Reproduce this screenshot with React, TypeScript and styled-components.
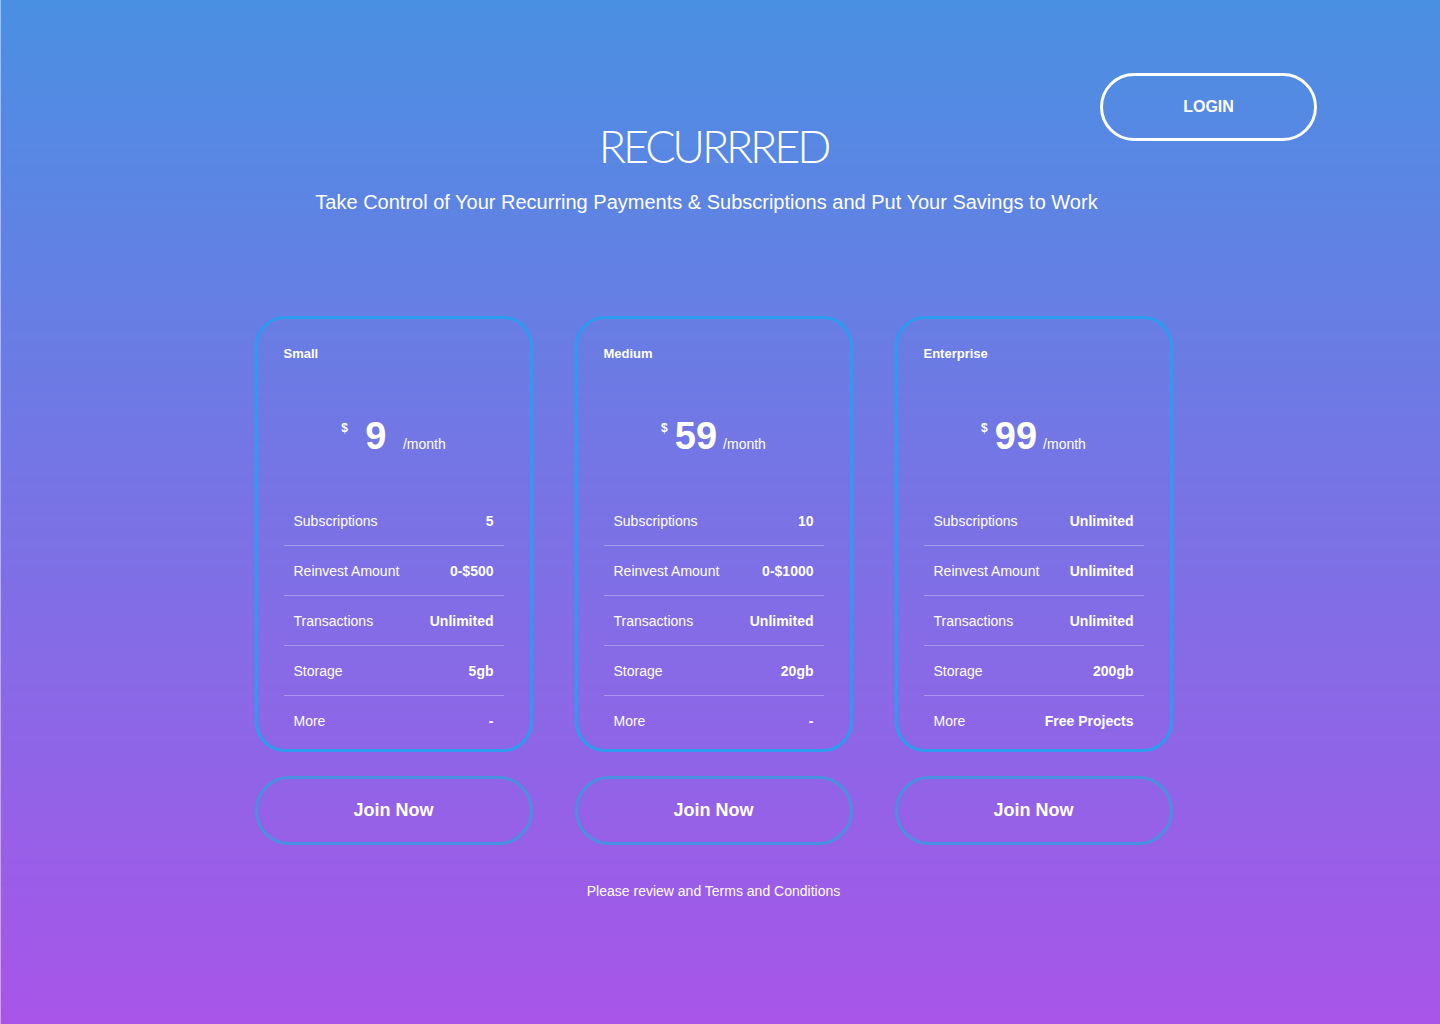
import React from "react";
import styled, { createGlobalStyle } from "styled-components";

interface Plan {
    name: string;
    price: number;
    subscriptions: string;
    reinvest: string;
    transactions: string;
    storage: string;
    more: string;
}

const plans: Plan[] = [
    { name: "Small", price: 9, subscriptions: "5", reinvest: "0-$500", transactions: "Unlimited", storage: "5gb", more: "-" },
    { name: "Medium", price: 59, subscriptions: "10", reinvest: "0-$1000", transactions: "Unlimited", storage: "20gb", more: "-" },
    { name: "Enterprise", price: 99, subscriptions: "Unlimited", reinvest: "Unlimited", transactions: "Unlimited", storage: "200gb", more: "Free Projects" },
];

const GlobalStyle = createGlobalStyle`
    html, body {
        margin: 0;
        padding: 0;
    }
    body {
        font-family: "Liberation Sans", Arial, sans-serif;
        color: white;
    }
    * {
        box-sizing: border-box;
    }
`;

export default function App() {
    return (
        <>
            <GlobalStyle />
            <Page>
                <Header>
                    <LoginButton>LOGIN</LoginButton>
                    <Title>RECURRRED</Title>
                    <Subtitle>
                        Take Control of Your Recurring Payments &amp; Subscriptions and Put Your Savings to Work
                    </Subtitle>
                </Header>
                <PlanRow>
                    {plans.map(plan => (
                        <PlanColumn key={plan.name}>
                            <Card>
                                <PlanName>{plan.name}</PlanName>
                                <PriceLine>
                                    <Currency>$</Currency>
                                    <Amount>{plan.price}</Amount>
                                    <Period>/month</Period>
                                </PriceLine>
                                <FeatureList>
                                    <Feature>
                                        <FeatureLabel>Subscriptions</FeatureLabel>
                                        <FeatureValue>{plan.subscriptions}</FeatureValue>
                                    </Feature>
                                    <Feature>
                                        <FeatureLabel>Reinvest Amount</FeatureLabel>
                                        <FeatureValue>{plan.reinvest}</FeatureValue>
                                    </Feature>
                                    <Feature>
                                        <FeatureLabel>Transactions</FeatureLabel>
                                        <FeatureValue>{plan.transactions}</FeatureValue>
                                    </Feature>
                                    <Feature>
                                        <FeatureLabel>Storage</FeatureLabel>
                                        <FeatureValue>{plan.storage}</FeatureValue>
                                    </Feature>
                                    <Feature>
                                        <FeatureLabel>More</FeatureLabel>
                                        <FeatureValue>{plan.more}</FeatureValue>
                                    </Feature>
                                </FeatureList>
                            </Card>
                            <JoinButton>Join Now</JoinButton>
                        </PlanColumn>
                    ))}
                </PlanRow>
                <Terms>Please review and Terms and Conditions</Terms>
            </Page>
        </>
    );
}

const Page = styled.div`
    min-height: 1024px;
    padding: 73px 14px 0 0;
    border-left: 1px solid rgba(255, 255, 255, 0.45);
    background: linear-gradient(180deg, #4a90e2 0%, #a855e8 100%);
    display: flex;
    flex-direction: column;
    align-items: center;
`;

const Header = styled.header`
    width: 100%;
    display: grid;
    grid-template-columns: 1fr auto 1fr;
    grid-template-rows: 48px auto auto;
`;

const LoginButton = styled.button`
    grid-column: 3;
    grid-row: 1 / span 2;
    justify-self: end;
    align-self: start;
    margin-right: 109px;
    width: 217px;
    height: 68px;
    border: 3px solid white;
    border-radius: 34px;
    background: transparent;
    color: white;
    font-family: "Liberation Sans", Arial, sans-serif;
    font-weight: bold;
    font-size: 16px;
    cursor: pointer;
`;

const Title = styled.h1`
    grid-column: 2;
    grid-row: 2;
    margin: 0;
    font-family: Lato, "Open Sans", sans-serif;
    font-weight: 300;
    font-size: 45px;
    letter-spacing: -3.2px;
    line-height: 50px;
    text-align: center;
`;

const Subtitle = styled.p`
    grid-column: 1 / -1;
    grid-row: 3;
    margin: 19px 0 0;
    padding-right: 14px;
    font-size: 20px;
    line-height: 24px;
    text-align: center;
`;

const PlanRow = styled.div`
    display: flex;
    gap: 42px;
    margin-top: 102px;
`;

const PlanColumn = styled.div`
    display: flex;
    flex-direction: column;
    gap: 24px;
    width: 278px;
`;

const Card = styled.div`
    height: 436px;
    border: 3px solid #2d9bf0;
    border-radius: 30px;
    padding: 27px 26px 3px;
    display: flex;
    flex-direction: column;
`;

const PlanName = styled.div`
    font-size: 13px;
    font-weight: bold;
    line-height: 16px;
`;

const PriceLine = styled.div`
    margin-top: 52px;
    height: 44px;
    line-height: 44px;
    text-align: center;
    white-space: nowrap;
`;

const Currency = styled.span`
    display: inline-block;
    font-size: 12px;
    font-weight: bold;
    line-height: 12px;
    vertical-align: 17px;
    margin-right: 7px;
`;

const Amount = styled.span`
    display: inline-block;
    min-width: 42px;
    font-size: 38px;
    font-weight: bold;
    text-align: center;
`;

const Period = styled.span`
    font-size: 14px;
    margin-left: 6px;
`;

const FeatureList = styled.div`
    margin-top: 38px;
    display: flex;
    flex-direction: column;
`;

const Feature = styled.div`
    height: 50px;
    padding: 0 10px;
    display: flex;
    align-items: center;
    justify-content: space-between;
    font-size: 14px;
    border-bottom: 1px solid rgba(255, 255, 255, 0.3);

    &:last-child {
        border-bottom: none;
    }
`;

const FeatureLabel = styled.span`
    font-weight: normal;
`;

const FeatureValue = styled.span`
    font-weight: bold;
`;

const JoinButton = styled.button`
    height: 69px;
    border: 3px solid #4a90e2;
    border-radius: 35px;
    background: transparent;
    color: white;
    font-family: "Liberation Sans", Arial, sans-serif;
    font-weight: bold;
    font-size: 18px;
    cursor: pointer;
`;

const Terms = styled.p`
    margin: 38px 0 0;
    font-size: 14px;
    line-height: 16px;
`;
